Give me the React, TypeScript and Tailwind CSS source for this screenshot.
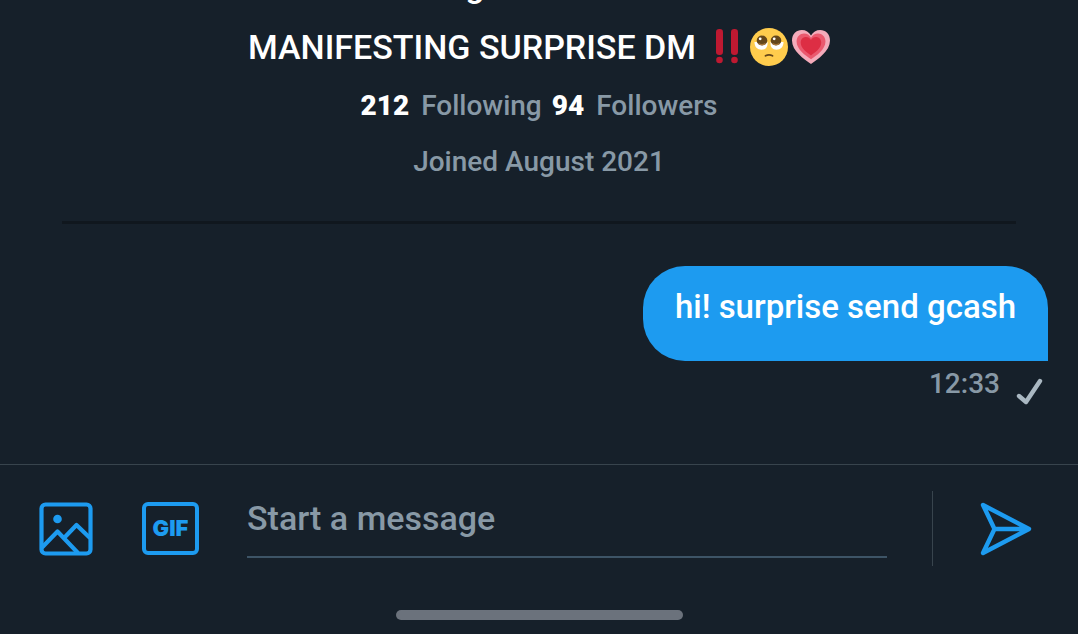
import clsx from 'clsx';

const stats = [
  { count: '212', label: 'Following' },
  { count: '94', label: 'Followers' },
];

const messages = [{ id: 1, text: 'hi! surprise send gcash', time: '12:33' }];

function DoubleExclamation() {
  return (
    <svg viewBox="0 0 38 38" className="size-[38px]" role="img" aria-label="Double exclamation mark">
      <g fill="#be1931">
        <rect x="8" y="1" width="7" height="26" rx="3.2" />
        <rect x="23" y="1" width="7" height="26" rx="3.2" />
        <circle cx="11.5" cy="32" r="3.3" />
        <circle cx="26.5" cy="32" r="3.3" />
      </g>
    </svg>
  );
}

function PleadingFace() {
  return (
    <svg viewBox="0 0 38 38" className="size-[38px]" role="img" aria-label="Pleading face">
      <circle cx="19" cy="19" r="19" fill="#ffcc4d" />
      <path d="M4.5 14C4.500 19 7.500 21.700 11.500 21.700S18 19 17.500 14Z" fill="#fff" />
      <path d="M33.5 14C33.500 19 30.500 21.700 26.500 21.700S20 19 20.500 14Z" fill="#fff" />
      <ellipse cx="12" cy="12.500" rx="5.300" ry="4.900" fill="#65471b" />
      <ellipse cx="26" cy="12.500" rx="5.300" ry="4.900" fill="#65471b" />
      <circle cx="10.200" cy="10.800" r="1.400" fill="#fff" />
      <circle cx="24.200" cy="10.800" r="1.400" fill="#fff" />
      <path d="M8.500 15.500Q12 17.700 15.500 15.500M22.500 15.500Q26 17.700 29.500 15.500" fill="none" stroke="#a8763a" strokeWidth="1.200" />
      <path d="M15.500 27.800Q19 26 22.500 27.800" fill="none" stroke="#65471b" strokeWidth="1.800" strokeLinecap="round" />
    </svg>
  );
}

function GrowingHeart() {
  const heart =
    'M19 36C12 31 0 23 0 12.500C0 6 4.500 2 9.800 2C13.800 2 17 4 19 7.500C21 4 24.200 2 28.200 2C33.500 2 38 6 38 12.500C38 23 26 31 19 36Z';
  return (
    <svg viewBox="0 0 38 38" className="size-[38px]" role="img" aria-label="Growing heart">
      <path d={heart} fill="#f4abba" />
      <path d={heart} fill="#ea596e" transform="translate(4.600 4) scale(.76)" />
      <path d={heart} fill="#dd2e44" transform="translate(8.700 8) scale(.54)" />
    </svg>
  );
}

function PhotoIcon() {
  return (
    <svg viewBox="0 0 54 54" className="size-[54px]" fill="none" stroke="currentColor" strokeWidth="4.2" aria-hidden="true">
      <rect x="2.500" y="2.500" width="49" height="49" rx="4" />
      <path d="M3 45.500L18.500 29.500L39 51M25.500 35.500L37.500 23L51 36" strokeLinejoin="round" />
      <circle cx="18.500" cy="17" r="4.300" fill="currentColor" stroke="none" />
    </svg>
  );
}

function SendIcon() {
  return (
    <svg
      viewBox="0 0 52 54"
      className="h-[54px] w-[52px]"
      fill="none"
      stroke="currentColor"
      strokeWidth="4.4"
      strokeLinecap="round"
      strokeLinejoin="round"
      aria-hidden="true"
    >
      <path d="M3 3L49 27L3 51L14.500 27ZM14.500 27H48" />
      <path d="M41 24.500L49 27L41 29.500Z" fill="currentColor" strokeWidth="2" />
    </svg>
  );
}

function Profile() {
  return (
    <section className="mx-[62px] flex flex-col items-center border-b-3 border-[#10171e] pb-[39px]">
      <p className="-mt-[35px] mr-32 text-[34px] leading-10 text-white">g</p>
      <p className="mt-[22px] flex items-center text-[34px] leading-10 text-white">
        MANIFESTING SURPRISE DM
        <span className="ml-3 flex gap-1">
          <DoubleExclamation />
          <PleadingFace />
          <GrowingHeart />
        </span>
      </p>
      <ul className="mt-[19px] flex gap-[10px] text-[28px] leading-10">
        {stats.map((stat) => (
          <li key={stat.label} className="flex gap-3">
            <b className="font-black text-white">{stat.count}</b>
            <span>{stat.label}</span>
          </li>
        ))}
      </ul>
      <p className="mt-4 text-[28px] leading-10">Joined August 2021</p>
    </section>
  );
}

function Composer() {
  return (
    <form
      className="flex items-center border-t border-[#38444d] pt-[26px] pr-[46px] pl-[39px] text-[#1d9bf0]"
      onSubmit={(e) => e.preventDefault()}
    >
      <button type="button" aria-label="Add photo">
        <PhotoIcon />
      </button>
      <button
        type="button"
        aria-label="Add a GIF"
        className="ml-[49px] flex h-[53px] w-[57px] items-center justify-center rounded-md border-4 border-current font-[Inter,sans-serif] text-[22px] font-black"
      >
        GIF
      </button>
      <input
        type="text"
        aria-label="Start a message"
        placeholder="Start a message"
        className="mb-2 ml-12 h-16 min-w-0 flex-1 self-end border-b-2 border-[#3d5466] pb-[14px] text-[34px] text-white outline-none placeholder:text-[#8899a6]"
      />
      <div className="ml-[45px] h-[75px] w-px bg-[#38444d]" />
      <button type="submit" aria-label="Send" className="ml-[47px]">
        <SendIcon />
      </button>
    </form>
  );
}

export default function App() {
  return (
    <div className="flex min-h-screen flex-col overflow-hidden bg-[#16202a] font-[Roboto,sans-serif] font-medium text-[#8899a6]">
      <Profile />
      <main className="flex flex-1 flex-col items-end px-[30px] pt-[42px]">
        {messages.map((message) => (
          <div key={message.id} className="flex flex-col items-end">
            <p
              className={clsx(
                'rounded-[42px] rounded-br-none bg-[#1d9bf0] px-8',
                'pt-[21px] pb-[34px] text-[33px] leading-10 text-white'
              )}
            >
              {message.text}
            </p>
            <div className="mt-[3px] flex gap-4 pr-1 text-[28px] leading-10">
              <time>{message.time}</time>
              <svg viewBox="0 0 28 28" className="mt-[14px] size-7" fill="none" stroke="#aab8c2" strokeWidth="4.4" strokeLinecap="round" strokeLinejoin="round" role="img" aria-label="Sent">
                <path d="M3 18L10 24L24 3" />
              </svg>
            </div>
          </div>
        ))}
      </main>
      <Composer />
      <div className="mx-auto mt-11 mb-[14px] h-[10px] w-[287px] rounded-full bg-[#6b727c]" />
    </div>
  );
}
